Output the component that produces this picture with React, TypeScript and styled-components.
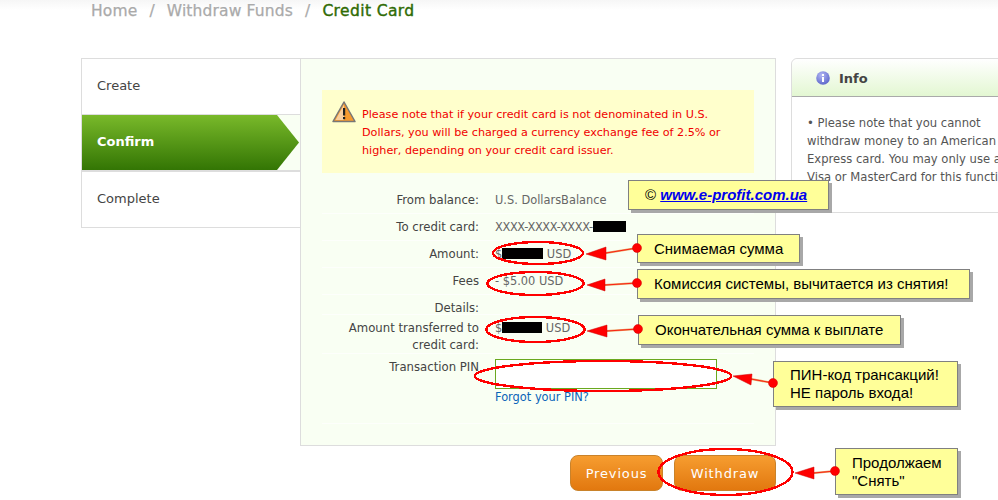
import React from "react";
import styled, { createGlobalStyle } from "styled-components";

const Global = createGlobalStyle`
  html, body { margin: 0; padding: 0; background: #fff; }
  body { font-family: "DejaVu Sans", sans-serif; }
`;

const Page = styled.div`
  position: relative;
  width: 998px;
  height: 500px;
  overflow: hidden;
  background: linear-gradient(#f6f6f6, #fff 10px);
  font-size: 11.4px;
  color: #444;
`;

const Crumbs = styled.nav`
  display: flex;
  gap: 12px;
  height: 58px;
  padding: 1px 0 0 91px;
  box-sizing: border-box;
  font-size: 15.5px;
  line-height: 20px;
  letter-spacing: 0.15px;
  color: #aaa;
  -webkit-text-stroke: 0.25px #aaa;
`;
const CrumbCurrent = styled.span`
  color: #2f6b05;
  letter-spacing: 0.4px;
  -webkit-text-stroke: 0.4px #2f6b05;
`;

const Main = styled.div`
  display: flex;
  margin-left: 81px;
  width: 1100px;
`;
const LeftBlock = styled.div`
  width: 695px;
  flex: none;
`;
const Wizard = styled.div`
  display: flex;
`;
const Steps = styled.ul`
  list-style: none;
  margin: 0;
  padding: 0;
  width: 219px;
  flex: none;
`;
const Step = styled.li`
  height: 53px;
  box-sizing: content-box;
  display: flex;
  align-items: center;
  padding: 0 0 2px 15px;
  background: #fff;
  border: 1px solid #ddd;
  border-right: 0;
  font-size: 13px;
  color: #444;
  & + & { border-top: 0; }
`;
const ActiveStep = styled.li`
  height: 56px;
  background: #f9fff3;
  border-left: 1px solid #ddd;
  border-bottom: 1px solid #ddd;
  box-sizing: border-box;
`;
const ActiveFill = styled.div`
  height: 55px;
  width: 217px;
  padding: 0 0 2px 15px;
  box-sizing: border-box;
  display: flex;
  align-items: center;
  color: #fff;
  font-size: 13px;
  font-weight: 700;
  background: linear-gradient(#79b92a, #337504);
  clip-path: polygon(0 0, 195px 0, 100% 50%, 195px 100%, 0 100%);
`;

const Panel = styled.section`
  width: 476px;
  height: 388px;
  flex: none;
  box-sizing: border-box;
  padding: 31px 21px 0;
  background: #f9fff3;
  border: 1px solid #ddd;
`;
const Notice = styled.div`
  display: flex;
  gap: 6px;
  height: 83px;
  box-sizing: border-box;
  padding: 11px 10px 0;
  background: #ffffcc;
  color: #f00000;
  font-size: 11.2px;
  line-height: 18px;
  margin-bottom: 14px;
  white-space: nowrap;
`;
const NoticeText = styled.p`
  margin: 5px 0 0;
`;
const Row = styled.div<{ $h: number }>`
  display: grid;
  grid-template-columns: 157px 1fr;
  column-gap: 16px;
  align-items: start;
  height: ${(p) => p.$h}px;
  padding-top: 5px;
  border-bottom: 1px solid #fdfffb;
  box-sizing: border-box;
  line-height: 17px;
`;
const Label = styled.div`
  text-align: right;
  color: #444;
  font-size: 11.7px;
`;
const Value = styled.div`
  color: #666;
`;
const CardNumber = styled.span`
  letter-spacing: -0.35px;
`;
const Redact = styled.span<{ $w: number }>`
  display: inline-block;
  width: ${(p) => p.$w}px;
  height: 11px;
  background: #000;
  vertical-align: -1px;
`;
const PinInput = styled.input`
  display: block;
  width: 222px;
  height: 30px;
  box-sizing: border-box;
  border: 1px solid #6aa81f;
  background: #fff;
  padding: 0;
`;
const Forgot = styled.a`
  display: block;
  color: #0a64b8;
  text-decoration: none;
`;

const Actions = styled.div`
  display: flex;
  justify-content: flex-end;
  gap: 11px;
  margin-top: 9px;
`;
const Button = styled.button<{ $w: number }>`
  width: ${(p) => p.$w}px;
  height: 36px;
  border: 1px solid #c9822a;
  border-radius: 8px;
  background: linear-gradient(#f69d30, #e2780f);
  color: #fff;
  font: 13px "DejaVu Sans", sans-serif;
  letter-spacing: 0.85px;
  padding: 0;
`;

const Info = styled.aside`
  margin-left: 15px;
  width: 300px;
  height: 155px;
  box-sizing: border-box;
  background: #fff;
  border: 1px solid #ddd;
  border-top-left-radius: 6px;
`;
const InfoHead = styled.header`
  display: flex;
  align-items: center;
  gap: 9px;
  height: 38px;
  box-sizing: border-box;
  padding: 1px 0 0 24px;
  background: linear-gradient(#fff, #e3f7d2);
  border-bottom: 1px solid #aaa;
  border-top-left-radius: 6px;
  font-size: 13px;
  font-weight: 700;
  color: #444;
`;
const InfoBody = styled.p`
  margin: 0;
  padding: 17px 0 0 15px;
  font-size: 11.6px;
  line-height: 18px;
  white-space: nowrap;
  color: #555;
`;

const Overlay = styled.svg`
  position: absolute;
  left: 0;
  top: 0;
  pointer-events: none;
`;
const Callout = styled.div<{ $x: number; $y: number; $w: number; $h: number }>`
  position: absolute;
  left: ${(p) => p.$x}px;
  top: ${(p) => p.$y}px;
  width: ${(p) => p.$w}px;
  height: ${(p) => p.$h}px;
  box-sizing: border-box;
  display: flex;
  align-items: center;
  padding-left: 16px;
  background: #ffff99;
  border: 1px solid #808080;
  box-shadow: 3px 3px 0 #a8a8a8;
  font-family: "Liberation Sans", Arial, sans-serif;
  font-size: 15px;
  line-height: 18px;
  color: #000;
  white-space: nowrap;
`;
const Brand = styled.a`
  color: #0000ee;
  font-weight: 700;
  font-style: italic;
  text-decoration: underline;
`;

const ells = [
  [538, 253, 45, 11],
  [535.5, 283.5, 48, 11.5],
  [535.5, 329.5, 49, 12.5],
  [603, 376, 128, 15],
  [725.5, 472, 67, 23],
];
const arrows = [
  { dot: [637, 248], tip: [586, 254], base: [[606, 247], [606, 260]], neck: [606, 253] },
  { dot: [637, 283], tip: [587, 285], base: [[605, 279], [605, 291]], neck: [605, 285] },
  { dot: [638, 329], tip: [587, 331], base: [[607, 325], [607, 337]], neck: [607, 331] },
  { dot: [773, 383], tip: [733, 376], base: [[752, 374], [751, 385]], neck: [751, 379] },
  { dot: [835, 471], tip: [795, 473], base: [[814, 467], [814, 479]], neck: [814, 473] },
];

const WarnIcon = () => (
  <svg width="24" height="22" viewBox="0 0 24 22" style={{ flex: "none" }}>
    <path d="M12 1 L23 20.5 H1 Z" fill="#f79a2e" stroke="#777" strokeWidth="1.5" strokeLinejoin="round" />
    <path d="M12 3.5 L3.5 19 H12 Z" fill="#fbfbfb" opacity="0.55" />
    <rect x="11" y="7" width="2.2" height="7.5" fill="#222" />
    <rect x="11" y="16" width="2.2" height="2.2" fill="#222" />
  </svg>
);
const InfoIcon = () => (
  <svg width="14" height="14" viewBox="0 0 14 14">
    <defs>
      <radialGradient id="ig" cx="40%" cy="30%" r="75%">
        <stop offset="0" stopColor="#b3b8f4" />
        <stop offset="1" stopColor="#5a63c9" />
      </radialGradient>
    </defs>
    <circle cx="7" cy="7" r="6.8" fill="url(#ig)" />
    <rect x="6" y="3" width="2" height="2" fill="#fff" />
    <rect x="6" y="6" width="2" height="5" fill="#fff" />
  </svg>
);

export default function App() {
  return (
    <Page>
      <Global />
      <Crumbs>
        <span>Home</span>
        <span>/</span>
        <span>Withdraw Funds</span>
        <span>/</span>
        <CrumbCurrent>Credit Card</CrumbCurrent>
      </Crumbs>
      <Main>
        <LeftBlock>
          <Wizard>
            <Steps>
              <Step>Create</Step>
              <ActiveStep>
                <ActiveFill>Confirm</ActiveFill>
              </ActiveStep>
              <Step>Complete</Step>
            </Steps>
            <Panel>
              <Notice>
                <WarnIcon />
                <NoticeText>
                  Please note that if your credit card is not denominated in U.S.
                  <br />
                  Dollars, you will be charged a currency exchange fee of 2.5% or
                  <br />
                  higher, depending on your credit card issuer.
                </NoticeText>
              </Notice>
              <Row $h={27}>
                <Label>From balance:</Label>
                <Value>U.S. DollarsBalance</Value>
              </Row>
              <Row $h={27}>
                <Label>To credit card:</Label>
                <Value>
                  <CardNumber>XXXX-XXXX-XXXX-</CardNumber>
                  <Redact $w={33} />
                </Value>
              </Row>
              <Row $h={27}>
                <Label>Amount:</Label>
                <Value>
                  $<Redact $w={41} /> USD
                </Value>
              </Row>
              <Row $h={27}>
                <Label>Fees</Label>
                <Value>- $5.00 USD</Value>
              </Row>
              <Row $h={20}>
                <Label>Details:</Label>
                <Value />
              </Row>
              <Row $h={39}>
                <Label>
                  Amount transferred to
                  <br />
                  credit card:
                </Label>
                <Value>
                  $<Redact $w={40} /> USD
                </Value>
              </Row>
              <Row $h={70}>
                <Label>Transaction PIN</Label>
                <div>
                  <PinInput aria-label="Transaction PIN" />
                  <Forgot>Forgot your PIN?</Forgot>
                </div>
              </Row>
            </Panel>
          </Wizard>
          <Actions>
            <Button $w={93}>Previous</Button>
            <Button $w={102}>Withdraw</Button>
          </Actions>
        </LeftBlock>
        <Info>
          <InfoHead>
            <InfoIcon />
            Info
          </InfoHead>
          <InfoBody>
            • Please note that you cannot
            <br />
            withdraw money to an American
            <br />
            Express card. You may only use a
            <br />
            Visa or MasterCard for this function.
          </InfoBody>
        </Info>
      </Main>

      <Overlay width="998" height="500" viewBox="0 0 998 500">
        {ells.map(([cx, cy, rx, ry]) => (
          <ellipse key={cx + "-" + cy} cx={cx} cy={cy} rx={rx} ry={ry} fill="none" stroke="#f00" strokeWidth="2.4" shapeRendering="crispEdges" />
        ))}
        {arrows.map((a) => (
          <g key={a.dot[1]}>
            <line x1={a.dot[0]} y1={a.dot[1]} x2={a.neck[0]} y2={a.neck[1]} stroke="#e8a060" strokeWidth="2" />
            <line x1={a.dot[0]} y1={a.dot[1]} x2={a.neck[0]} y2={a.neck[1]} stroke="#f00" strokeWidth="0.8" />
            <polygon points={`${a.tip} ${a.base[0]} ${a.base[1]}`} fill="#f00" stroke="#c00" strokeWidth="0.5" />
          </g>
        ))}
      </Overlay>

      <Callout $x={628} $y={180} $w={201} $h={30}>
        ©&nbsp;<Brand>www.e-profit.com.ua</Brand>
      </Callout>
      <Callout $x={637} $y={234} $w={163} $h={29}>Снимаемая сумма</Callout>
      <Callout $x={637} $y={269} $w={333} $h={30}>Комиссия системы, вычитается из снятия!</Callout>
      <Callout $x={638} $y={315} $w={263} $h={30}>Окончательная сумма к выплате</Callout>
      <Callout $x={773} $y={361} $w={185} $h={46}>
        <span>ПИН-код трансакций!<br />НЕ пароль входа!</span>
      </Callout>
      <Callout $x={835} $y={448} $w={123} $h={47}>
        <span>Продолжаем<br />"Снять"</span>
      </Callout>
      <Overlay width="998" height="500" viewBox="0 0 998 500">
        {arrows.map((a) => (
          <circle key={a.dot[1]} cx={a.dot[0]} cy={a.dot[1]} r="4.5" fill="#f00" stroke="#c00" strokeWidth="0.5" />
        ))}
      </Overlay>
    </Page>
  );
}
